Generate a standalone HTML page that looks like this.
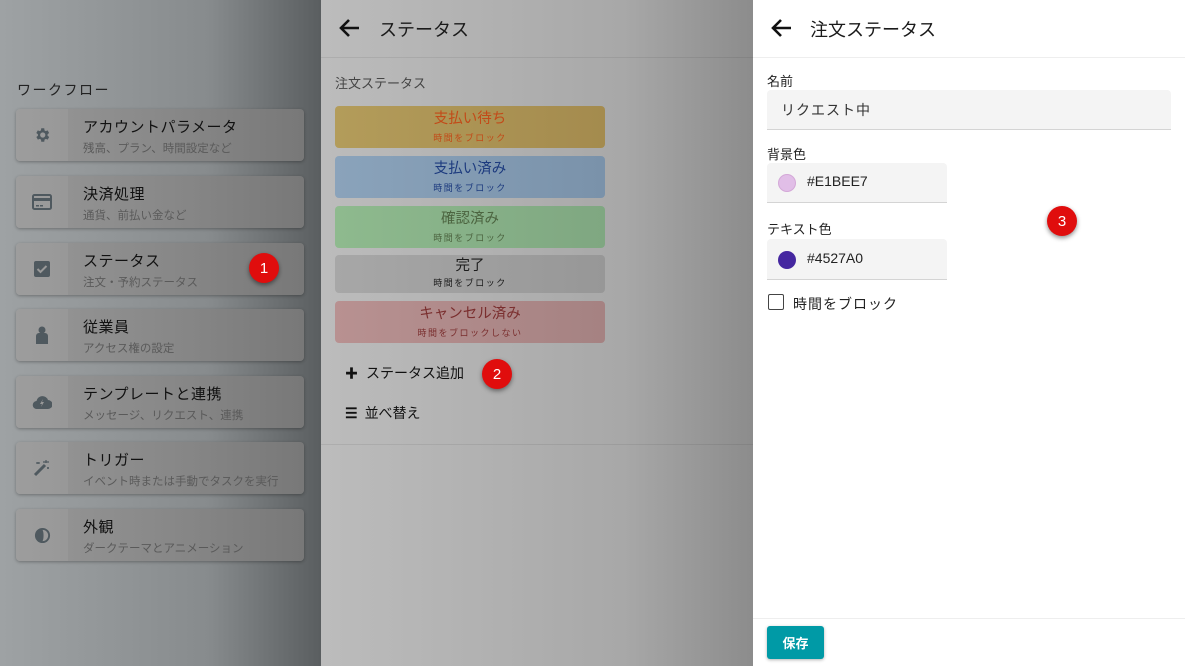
<!DOCTYPE html>
<html><head><meta charset="utf-8"><style>
*{box-sizing:border-box;margin:0;padding:0}
body{width:1185px;height:666px;overflow:hidden;font-family:"Liberation Sans","Noto Sans CJK JP",sans-serif;position:relative;background:#fff}
.left{position:absolute;left:0;top:0;width:321px;height:666px;background:linear-gradient(to right,#9ea2a4,#878b8d 65%,#5a5e60)}
.wf{position:absolute;left:17px;top:80px;font-size:14px;color:#222;letter-spacing:1.5px}
.card{position:absolute;left:16px;width:288px;height:52px;border-radius:4px;background:linear-gradient(to right,#979797,#868686 60%,#787878);box-shadow:0 1px 3px rgba(0,0,0,.3);overflow:hidden}
.card .ic{position:absolute;left:0;top:0;width:52px;height:52px;background:rgba(255,255,255,.06);display:flex;align-items:center;justify-content:center}
.card .t{position:absolute;left:67px;top:7px;font-size:15px;color:#111;letter-spacing:.5px}
.card .s{position:absolute;left:67px;top:31px;font-size:11.5px;color:#5a5a5a}
.badge{position:absolute;width:30px;height:30px;border-radius:50%;background:#e00d0d;color:#fff;font-size:15px;display:flex;align-items:center;justify-content:center;box-shadow:0 2px 5px rgba(0,0,0,.45)}
.mid{position:absolute;left:321px;top:0;width:432px;height:666px;background:linear-gradient(to right,#bcbcbc,#a8a8a8 70%,#8c8c8c)}
.hline{position:absolute;left:0;right:0;height:1px;background:rgba(0,0,0,.07)}
.st{position:absolute;left:14px;width:270px;border-radius:4px;text-align:center}
.st .a{font-size:14.5px;line-height:17px;padding-top:5px}
.st .b{font-size:9px;letter-spacing:1.5px;margin-top:3px}
.right{position:absolute;left:753px;top:0;width:432px;height:666px;background:#fff}
.lbl{position:absolute;left:14px;font-size:13px;color:#222}
.fld{position:absolute;left:14px;background:#f4f4f4;border-bottom:1px solid #d4d4d4;border-radius:4px 4px 0 0}
</style></head><body>
<div class="left">
 <div class="wf">ワークフロー</div>
 <div class="card" style="top:109px"><div class="ic"><svg width="18" height="18" viewBox="0 0 24 24"><path fill="#4f595f" d="M19.4 13a7.5 7.5 0 000-2l2.1-1.6-2-3.5-2.5 1a7 7 0 00-1.7-1L15 3h-4l-.4 2.8a7 7 0 00-1.7 1l-2.5-1-2 3.5L6.6 11a7.5 7.5 0 000 2l-2.1 1.6 2 3.5 2.5-1a7 7 0 001.7 1L11 21h4l.4-2.8a7 7 0 001.7-1l2.5 1 2-3.5zM13 15.5a3.5 3.5 0 110-7 3.5 3.5 0 010 7z"/></svg></div><div class="t">アカウントパラメータ</div><div class="s">残高、プラン、時間設定など</div></div>
 <div class="card" style="top:176px"><div class="ic"><svg width="20" height="16" viewBox="0 0 20 16"><rect x="1" y="1" width="18" height="14" rx="1.5" fill="none" stroke="#4f595f" stroke-width="2"/><rect x="1" y="4" width="18" height="3" fill="#4f595f"/><rect x="4" y="11" width="3" height="1.5" fill="#4f595f"/><rect x="8" y="11" width="3" height="1.5" fill="#4f595f"/></svg></div><div class="t">決済処理</div><div class="s">通貨、前払い金など</div></div>
 <div class="card" style="top:243px"><div class="ic"><svg width="16" height="16" viewBox="0 0 16 16"><rect width="16" height="16" rx="2" fill="#4f595f"/><path d="M3.5 8l3 3 6-6" stroke="#999" stroke-width="2" fill="none"/></svg></div><div class="t">ステータス</div><div class="s">注文・予約ステータス</div></div>
 <div class="card" style="top:309px"><div class="ic"><svg width="14" height="18" viewBox="0 0 14 18"><circle cx="7" cy="4" r="3.5" fill="#4f595f"/><path d="M1 18V10a3 3 0 013-3h6a3 3 0 013 3v8z" fill="#4f595f"/></svg></div><div class="t">従業員</div><div class="s">アクセス権の設定</div></div>
 <div class="card" style="top:376px"><div class="ic"><svg width="20" height="14" viewBox="0 0 20 14"><path d="M5 14a4 4 0 01-.5-8A6 6 0 0116 5a4.5 4.5 0 010 9z" fill="#4f595f"/><path d="M11 4l-3 5h2l-1 3 3-5h-2z" fill="#999"/></svg></div><div class="t">テンプレートと連携</div><div class="s">メッセージ、リクエスト、連携</div></div>
 <div class="card" style="top:442px"><div class="ic"><svg width="18" height="18" viewBox="0 0 18 18"><path d="M2 16L12 6" stroke="#4f595f" stroke-width="3"/><path d="M13 1v3M10 3h6M5 3v2M3 4h4M15 8v2M14 9h2" stroke="#4f595f" stroke-width="1.2"/></svg></div><div class="t">トリガー</div><div class="s">イベント時または手動でタスクを実行</div></div>
 <div class="card" style="top:509px"><div class="ic"><svg width="17" height="17" viewBox="0 0 18 18"><circle cx="9" cy="9" r="8" fill="#4f595f"/><path d="M9 3a6 6 0 010 12c1.5-2 1.5-10 0-12z" fill="#999"/></svg></div><div class="t">外観</div><div class="s">ダークテーマとアニメーション</div></div>
 <div class="badge" style="left:249px;top:253px">1</div>
</div>
<div class="mid">
 <svg style="position:absolute;left:18px;top:18px" width="22" height="20" viewBox="0 0 22 20"><path d="M20 10H3M10 2L2 10l8 8" stroke="#111" stroke-width="2.6" fill="none"/></svg>
 <div style="position:absolute;left:58px;top:16px;font-size:18px;color:#1a1a1a">ステータス</div>
 <div class="hline" style="top:57px"></div>
 <div style="position:absolute;left:14px;top:73px;font-size:13px;color:#444">注文ステータス</div>
 <div class="st" style="top:106px;height:42px;background:linear-gradient(to right,#b39c5a,#a48b4e);color:#c24a18"><div class="a">支払い待ち</div><div class="b">時間をブロック</div></div>
 <div class="st" style="top:156px;height:42px;background:linear-gradient(to right,#8aa3bb,#7a92aa);color:#1c3a7e"><div class="a">支払い済み</div><div class="b">時間をブロック</div></div>
 <div class="st" style="top:206px;height:42px;background:linear-gradient(to right,#8eba8e,#7fa781);color:#4c6440"><div class="a">確認済み</div><div class="b">時間をブロック</div></div>
 <div class="st" style="top:255px;height:38px;background:linear-gradient(to right,#a7a7a7,#979797);color:#1c1c1c"><div class="a" style="padding-top:3px">完了</div><div class="b" style="margin-top:1px">時間をブロック</div></div>
 <div class="st" style="top:301px;height:42px;background:linear-gradient(to right,#b89191,#a58282);color:#7a2e2e"><div class="a">キャンセル済み</div><div class="b">時間をブロックしない</div></div>
 <div style="position:absolute;left:24px;top:363px;font-size:14px;color:#111"><b style="font-size:13px;margin-right:8px">✚</b>ステータス追加</div>
 <div style="position:absolute;left:24px;top:403px;font-size:14px;color:#111"><span style="font-weight:bold;margin-right:7px">☰</span>並べ替え</div>
 <div class="badge" style="left:161px;top:359px">2</div>
 <div class="hline" style="top:444px"></div>
</div>
<div class="right">
 <svg style="position:absolute;left:18px;top:18px" width="22" height="20" viewBox="0 0 22 20"><path d="M20 10H3M10 2L2 10l8 8" stroke="#111" stroke-width="2.6" fill="none"/></svg>
 <div style="position:absolute;left:57px;top:16px;font-size:18px;color:#1a1a1a">注文ステータス</div>
 <div class="hline" style="top:57px;background:#eee"></div>
 <div class="lbl" style="top:71px">名前</div>
 <div class="fld" style="top:90px;width:404px;height:40px"><span style="position:absolute;left:14px;top:10px;font-size:14px;color:#333;letter-spacing:1px">リクエスト中</span></div>
 <div class="lbl" style="top:144px">背景色</div>
 <div class="fld" style="top:163px;width:180px;height:40px"><span style="position:absolute;left:11px;top:11px;width:18px;height:18px;border-radius:50%;background:#e1bee7;border:1px solid #d4a8d8"></span><span style="position:absolute;left:40px;top:10px;font-size:14px;color:#222">#E1BEE7</span></div>
 <div class="lbl" style="top:219px">テキスト色</div>
 <div class="fld" style="top:239px;width:180px;height:41px"><span style="position:absolute;left:11px;top:12px;width:18px;height:18px;border-radius:50%;background:#4527a0"></span><span style="position:absolute;left:40px;top:11px;font-size:14px;color:#222">#4527A0</span></div>
 <div style="position:absolute;left:15px;top:294px;width:16px;height:16px;border:1.5px solid #444;border-radius:2px"></div>
 <div style="position:absolute;left:40px;top:294px;font-size:14px;color:#222;letter-spacing:1px">時間をブロック</div>
 <div class="badge" style="left:294px;top:206px">3</div>
 <div class="hline" style="top:618px;background:#eee"></div>
 <div style="position:absolute;left:14px;top:626px;width:57px;height:33px;background:#009aa6;border-radius:3px;color:#fff;font-size:13px;font-weight:bold;display:flex;align-items:center;justify-content:center;box-shadow:0 1px 3px rgba(0,0,0,.3)">保存</div>
</div>
</body></html>
